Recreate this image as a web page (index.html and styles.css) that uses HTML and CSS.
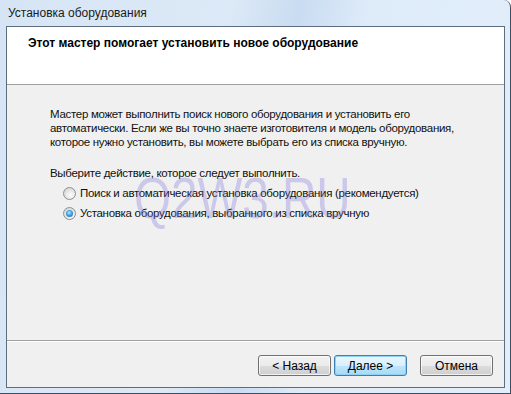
FILE: index.html
```html
<!DOCTYPE html>
<html lang="ru">

<head>
	<meta charset="UTF-8">
	<meta name="viewport" content="width=device-width, initial-scale=1.0">
	<title>Установка оборудования</title>
	<link rel="stylesheet" href="styles.css">
</head>

<body>
	<div class="window">
		<div class="title-bar">Установка оборудования</div>
		<div class="client">
			<div class="wizard-header">
				<h1>Этот мастер помогает установить новое оборудование</h1>
			</div>
			<div class="wizard-body">
				<div class="watermark">Q2W3.RU</div>
				<p class="intro">Мастер может выполнить поиск нового оборудования и установить его<br>
					автоматически. Если же вы точно знаете изготовителя и модель оборудования,<br>
					которое нужно установить, вы можете выбрать его из списка вручную.</p>
				<p class="prompt">Выберите действие, которое следует выполнить.</p>
				<ul class="choices">
					<li><span class="radio"></span>Поиск и автоматическая установка оборудования (рекомендуется)</li>
					<li><span class="radio checked"></span>Установка оборудования, выбранного из списка вручную</li>
				</ul>
			</div>
			<div class="wizard-footer">
				<button>&lt; Назад</button>
				<button class="default">Далее &gt;</button>
				<button class="cancel">Отмена</button>
			</div>
		</div>
	</div>
</body>

</html>
```

FILE: styles.css
```css
body {
	margin: 0;
	font-family: 'Liberation Sans', Arial, sans-serif;
	font-size: 12px;
	color: #000;
	background: #fff;
}

.window {
	width: 511px;
	height: 394px;
	box-sizing: border-box;
	display: flex;
	flex-direction: column;
	padding: 0 5px 5px 6px;
	background: linear-gradient(100deg, #d6e5f5 0%, #dce9f7 40%, #c9dcf1 52%, #deebf9 64%, #e2eefa 100%);
	border-right: 1px solid #3f4f63;
	border-bottom: 1px solid #3f4f63;
	border-radius: 0 7px 0 0;
}

.title-bar {
	height: 26px;
	line-height: 27px;
	padding-left: 2px;
	color: #1a1a1a;
}

.client {
	flex: 1;
	display: flex;
	flex-direction: column;
	border: 1px solid #5e6d7e;
	background: #f0f0f0;
}

.wizard-header {
	height: 58px;
	background: #fff;
	border-bottom: 1px solid #a0a0a0;
	padding: 9px 0 0 21px;
	box-sizing: border-box;
}

.wizard-header h1 {
	margin: 0;
	font-size: 12px;
	font-weight: bold;
	line-height: 15px;
}

.wizard-body {
	flex: 1;
	position: relative;
	padding: 22px 20px 0 43px;
	border-bottom: 1px solid #a0a0a0;
	box-shadow: 0 1px 0 #fff;
	font-size: 11.5px;
	letter-spacing: -0.3px;
	color: #111;
}

.intro {
	margin: 0;
	line-height: 14px;
	white-space: nowrap;
}

.prompt {
	margin: 17px 0 0;
	line-height: 14px;
}

.choices {
	list-style: none;
	margin: 3px 0 0;
	padding: 0 0 0 13px;
}

.choices li {
	display: flex;
	align-items: center;
	height: 20px;
	gap: 4px;
}

.radio {
	width: 11px;
	height: 11px;
	border-radius: 50%;
	border: 1px solid #8e8f8f;
	background: radial-gradient(circle at 60% 65%, #fdfdfd 0%, #e0e0e0 60%, #cfcfcf 100%);
	position: relative;
}

.radio.checked::after {
	content: '';
	position: absolute;
	left: 2px;
	top: 2px;
	width: 7px;
	height: 7px;
	border-radius: 50%;
	background: radial-gradient(circle at 45% 40%, #b9eaff 0%, #3ea3e3 45%, #1c5b9a 100%);
}

.watermark {
	position: absolute;
	left: 127px;
	top: 84px;
	font-size: 58px;
	line-height: 58px;
	letter-spacing: 0;
	color: rgba(120, 110, 220, 0.3);
	transform: scaleX(0.82);
	transform-origin: left top;
	pointer-events: none;
}

.wizard-footer {
	height: 45px;
	display: flex;
	justify-content: flex-end;
	align-items: flex-start;
	padding: 13px 11px 0 0;
	box-sizing: border-box;
	margin-top: 1px;
}

.wizard-footer button {
	width: 73px;
	height: 21px;
	margin-left: 3px;
	padding: 0;
	font-family: inherit;
	font-size: 12px;
	color: #000;
	border: 1px solid #707070;
	border-radius: 3px;
	background: linear-gradient(#f2f2f2 0%, #ebebeb 50%, #dddddd 51%, #cfcfcf 100%);
	box-shadow: inset 0 0 0 1px rgba(255, 255, 255, 0.7);
}

.wizard-footer button.default {
	border-color: #3c7fb1;
	background: linear-gradient(#eaf6fd 0%, #d9f0fc 50%, #bee6fd 51%, #a7d9f5 100%);
	box-shadow: inset 0 0 0 1px #8fd0f5;
}

.wizard-footer button.cancel {
	margin-left: 13px;
}
```
